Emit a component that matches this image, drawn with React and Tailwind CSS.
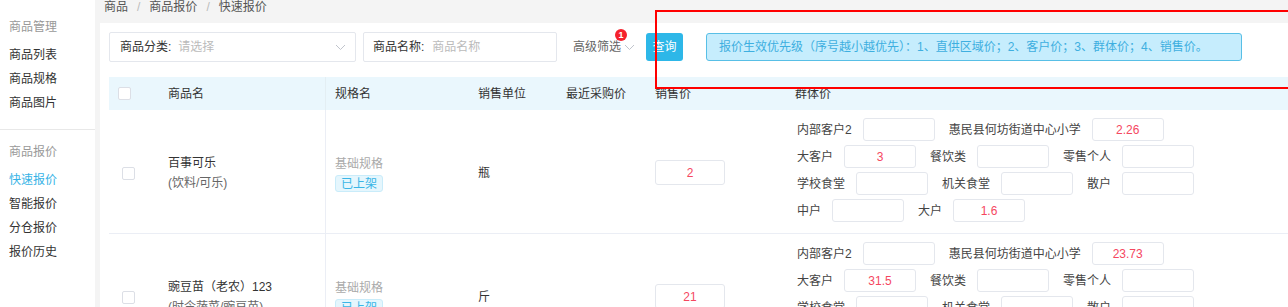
import React from "react";

const FONT = { fontFamily: '"Liberation Sans", "Noto Sans CJK SC", sans-serif' };

function Chevron({ className = "" }) {
  return (
    <svg width="11" height="7" viewBox="0 0 11 7" className={className}>
      <path d="M1 1l4.5 4.5L10 1" fill="none" stroke="#c0c4cc" strokeWidth="1" />
    </svg>
  );
}

function Checkbox({ className = "" }) {
  return <div className={"w-[13px] h-[13px] border border-[#dcdfe6] rounded-[2px] bg-white " + className} />;
}

function PriceBox({ value, w = "w-[72px]", h = "h-[23px]" }) {
  return (
    <div className={`${w} ${h} shrink-0 border border-[#e4e7ed] rounded-[3px] bg-white flex items-center justify-center text-[12px] text-[#f5475f]`}>
      {value}
    </div>
  );
}

const groups1 = [
  [["内部客户2", ""], ["惠民县何坊街道中心小学", "2.26"]],
  [["大客户", "3"], ["餐饮类", ""], ["零售个人", ""]],
  [["学校食堂", ""], ["机关食堂", ""], ["散户", ""]],
  [["中户", ""], ["大户", "1.6"]],
];
const groups2 = [
  [["内部客户2", ""], ["惠民县何坊街道中心小学", "23.73"]],
  [["大客户", "31.5"], ["餐饮类", ""], ["零售个人", ""]],
  [["学校食堂", ""], ["机关食堂", ""], ["散户", ""]],
  [["中户", ""], ["大户", ""]],
];

function GroupPrices({ rows }) {
  return (
    <div className="flex flex-col gap-[4px]">
      {rows.map((row, i) => (
        <div key={i} className="flex items-center h-[23px]">
          {row.map(([label, v], j) => (
            <div key={j} className="flex items-center mr-[14px]">
              <span className="text-[12px] text-[#444] mr-[11px] whitespace-nowrap">{label}</span>
              <PriceBox value={v} />
            </div>
          ))}
        </div>
      ))}
    </div>
  );
}

function Row({ name, sub, unit, price, groups }) {
  return (
    <div className="flex items-stretch border-b border-[#ebeef5] shrink-0">
      <div className="w-[59px] flex items-center pl-[13px] pt-[3px]">
        <Checkbox />
      </div>
      <div className="w-[157px] flex flex-col justify-center pt-[3px]">
        <div className="text-[12px] leading-[20px] text-[#333]">{name}</div>
        <div className="text-[12px] leading-[20px] text-[#666]">{sub}</div>
      </div>
      <div className="w-[153px] border-l border-[#ebeef5] pl-[9px] flex flex-col justify-center pt-[3px]">
        <div className="text-[12px] leading-[20px] text-[#aaa]">基础规格</div>
        <div className="mt-[1px] self-start h-[17px] px-[5px] flex items-center text-[12px] text-[#3ab5e6] bg-[#e5f6fd] border border-[#c9ecfa] rounded-[3px]">已上架</div>
      </div>
      <div className="w-[88px] flex items-center text-[12px] text-[#333] pt-[3px]">{unit}</div>
      <div className="w-[89px]" />
      <div className="w-[130px] flex items-center pt-[2px]">
        <PriceBox value={price} w="w-[70px]" h="h-[25px]" />
      </div>
      <div className="flex-1 pl-[12px] pt-[8px] pb-[11px]">
        <GroupPrices rows={groups} />
      </div>
    </div>
  );
}

export default function App() {
  return (
    <div className="relative flex h-[307px] w-full overflow-hidden bg-white" style={FONT}>
      {/* Sidebar */}
      <div className="w-[95px] shrink-0 bg-white text-[12px]">
        <div className="pt-[15px] pb-[14px] pl-[9px]">
          <div className="h-[24px] leading-[24px] text-[#999] mb-[4px]">商品管理</div>
          <div className="h-[24px] leading-[24px] text-[#333]">商品列表</div>
          <div className="h-[24px] leading-[24px] text-[#333]">商品规格</div>
          <div className="h-[24px] leading-[24px] text-[#333]">商品图片</div>
        </div>
        <div className="h-px bg-[#e8e8e8]" />
        <div className="pt-[10px] pl-[9px]">
          <div className="h-[24px] leading-[24px] text-[#999] mb-[4px]">商品报价</div>
          <div className="h-[24px] leading-[24px] text-[#36b3e6]">快速报价</div>
          <div className="h-[24px] leading-[24px] text-[#333]">智能报价</div>
          <div className="h-[24px] leading-[24px] text-[#333]">分仓报价</div>
          <div className="h-[24px] leading-[24px] text-[#333]">报价历史</div>
        </div>
      </div>

      {/* Main */}
      <div className="flex-1 min-w-0 flex flex-col bg-[#f4f4f4]">
        <div className="h-[23px] shrink-0 pl-[9px] text-[12px] leading-[14px] text-[#555] flex items-start">
          <span>商品</span>
          <span className="mx-[9px] text-[#bbb]">/</span>
          <span>商品报价</span>
          <span className="mx-[9px] text-[#bbb]">/</span>
          <span>快速报价</span>
        </div>
        <div className="flex-1 shrink-0 ml-[5px] bg-white pl-[9px] pt-[9px]">
          {/* Filters */}
          <div className="flex items-center h-[30px]">
            <div className="w-[247px] h-[30px] border border-[#e4e7ed] rounded-[2px] flex items-center pl-[10px] pr-[9px] text-[12px]">
              <span className="text-[#333]">商品分类:</span>
              <span className="ml-[7px] text-[#bbb]">请选择</span>
              <Chevron className="ml-auto" />
            </div>
            <div className="ml-[7px] w-[194px] h-[30px] border border-[#e4e7ed] rounded-[2px] flex items-center pl-[9px] text-[12px]">
              <span className="text-[#333]">商品名称:</span>
              <span className="ml-[8px] text-[#bbb]">商品名称</span>
            </div>
            <div className="ml-[16px] flex items-center text-[12px] text-[#666]">
              <span className="relative">
                高级筛选
                <span className="absolute -top-[9px] right-[-6px] w-[12px] h-[12px] rounded-full bg-[#f5222d] text-white text-[9px] font-bold leading-[12px] text-center">1</span>
              </span>
              <Chevron className="ml-[3px]" />
            </div>
            <div className="ml-[11px] w-[37px] h-[28px] rounded-[3px] bg-[#2db7e8] text-white text-[12px] flex items-center justify-center">查询</div>
            <div className="ml-[23px] w-[536px] h-[28px] rounded-[3px] bg-[#c6edfd] border border-[#58bfe6] text-[#3eafe0] text-[12px] flex items-center pl-[12px]">
              报价生效优先级（序号越小越优先）：1、直供区域价；2、客户价；3、群体价；4、销售价。
            </div>
          </div>

          {/* Table */}
          <div className="mt-[15px]">
            <div className="flex items-center h-[33px] bg-[#eaf7fd] text-[12px] text-[#333]">
              <div className="w-[59px] pl-[9px]"><Checkbox /></div>
              <div className="w-[157px]">商品名</div>
              <div className="w-[153px] h-full border-l border-[#e3eef3] pl-[9px] flex items-center">规格名</div>
              <div className="w-[88px]">销售单位</div>
              <div className="w-[89px]">最近采购价</div>
              <div className="w-[130px]">销售价</div>
              <div className="flex-1 pl-[10px]">群体价</div>
            </div>
            <Row name="百事可乐" sub="(饮料/可乐)" unit="瓶" price="2" groups={groups1} />
            <Row name="豌豆苗（老农）123" sub="(时令蔬菜/豌豆苗)" unit="斤" price="21" groups={groups2} />
          </div>
        </div>
      </div>

      {/* annotation overlay */}
      <div className="absolute left-[655px] top-[10px] w-[700px] h-[79px] border-2 border-[#f00] pointer-events-none" />
    </div>
  );
}
